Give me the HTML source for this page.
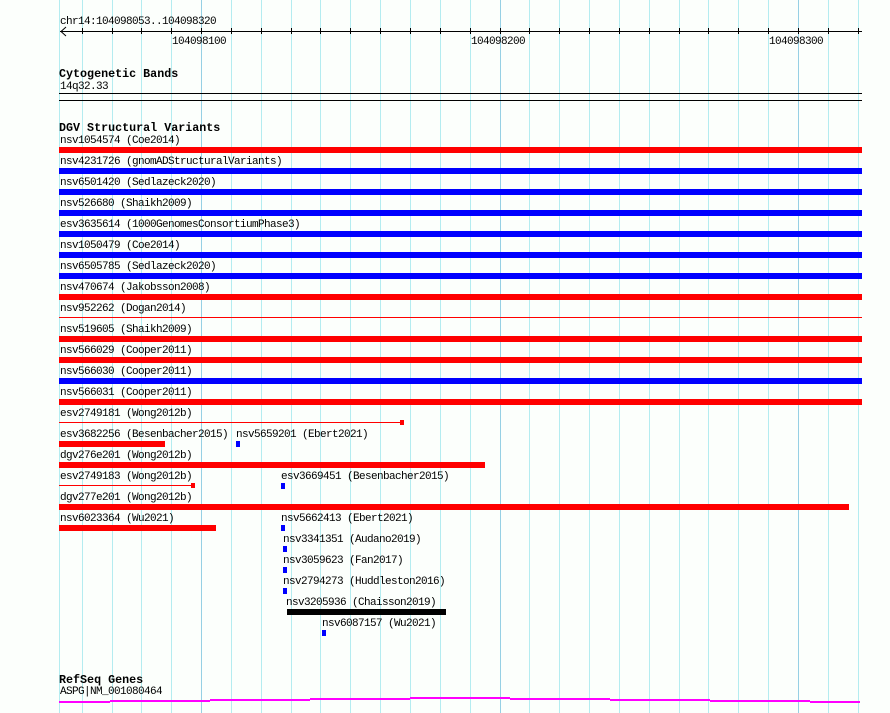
<!DOCTYPE html>
<html><head><meta charset="utf-8"><style>
body{margin:0;width:890px;height:713px;background:#fcfffc;position:relative;overflow:hidden;font-family:"Liberation Mono","DejaVu Sans Mono",monospace;}
.g{position:absolute;top:0;height:713px;width:1px;background:#b4ecf0}
.G{background:#96d0e4}
.t{position:absolute;font-size:11px;letter-spacing:-0.6px;line-height:12px;margin-top:1px;color:#000;white-space:pre}
.h{position:absolute;font-size:11.7px;line-height:13px;margin-top:1px;font-weight:bold;color:#000;white-space:pre}
.b{position:absolute;height:6px}
.r{background:#f00}.u{background:#00f}.k{background:#000}
.l{position:absolute;height:1px;background:#000}
.tk{position:absolute;top:28px;width:1px;height:6px;background:#000}
.p{position:absolute;height:2px;background:#f0f}
</style></head><body>
<div class="g" style="left:59px"></div><div class="g" style="left:82px"></div><div class="g" style="left:112px"></div><div class="g" style="left:141px"></div><div class="g" style="left:171px"></div><div class="g G" style="left:201px"></div><div class="g" style="left:231px"></div><div class="g" style="left:261px"></div><div class="g" style="left:291px"></div><div class="g" style="left:320px"></div><div class="g" style="left:350px"></div><div class="g" style="left:380px"></div><div class="g" style="left:410px"></div><div class="g" style="left:440px"></div><div class="g" style="left:470px"></div><div class="g G" style="left:500px"></div><div class="g" style="left:529px"></div><div class="g" style="left:559px"></div><div class="g" style="left:589px"></div><div class="g" style="left:619px"></div><div class="g" style="left:649px"></div><div class="g" style="left:679px"></div><div class="g" style="left:708px"></div><div class="g" style="left:738px"></div><div class="g" style="left:768px"></div><div class="g G" style="left:798px"></div><div class="g" style="left:828px"></div><div class="g" style="left:858px"></div>

<div class="t" style="left:60px;top:15px">chr14:104098053..104098320</div>
<div class="l" style="left:60px;top:31px;width:802px"></div>
<svg style="position:absolute;left:60px;top:26px" width="8" height="11"><path d="M6 1 L1 5.5 L6 10" stroke="#000" fill="none"/></svg>
<div class="tk" style="left:82px"></div><div class="tk" style="left:112px"></div><div class="tk" style="left:141px"></div><div class="tk" style="left:171px"></div><div class="tk" style="left:201px"></div><div class="tk" style="left:231px"></div><div class="tk" style="left:261px"></div><div class="tk" style="left:291px"></div><div class="tk" style="left:320px"></div><div class="tk" style="left:350px"></div><div class="tk" style="left:380px"></div><div class="tk" style="left:410px"></div><div class="tk" style="left:440px"></div><div class="tk" style="left:470px"></div><div class="tk" style="left:500px"></div><div class="tk" style="left:529px"></div><div class="tk" style="left:559px"></div><div class="tk" style="left:589px"></div><div class="tk" style="left:619px"></div><div class="tk" style="left:649px"></div><div class="tk" style="left:679px"></div><div class="tk" style="left:708px"></div><div class="tk" style="left:738px"></div><div class="tk" style="left:768px"></div><div class="tk" style="left:798px"></div><div class="tk" style="left:828px"></div><div class="tk" style="left:858px"></div>
<div class="t" style="left:172px;top:35px">104098100</div>
<div class="t" style="left:471px;top:35px">104098200</div>
<div class="t" style="left:769px;top:35px">104098300</div>

<div class="h" style="left:59px;top:67px">Cytogenetic Bands</div>
<div class="t" style="left:60px;top:80px">14q32.33</div>
<div class="l" style="left:59px;top:93px;width:803px"></div>
<div class="l" style="left:59px;top:100px;width:803px"></div>

<div class="h" style="left:59px;top:121px">DGV Structural Variants</div>
<div class="t" style="left:60px;top:134px">nsv1054574 (Coe2014)</div><div class="b r" style="left:59px;top:147px;width:803px"></div>
<div class="t" style="left:60px;top:155px">nsv4231726 (gnomADStructuralVariants)</div><div class="b u" style="left:59px;top:168px;width:803px"></div>
<div class="t" style="left:60px;top:176px">nsv6501420 (Sedlazeck2020)</div><div class="b u" style="left:59px;top:189px;width:803px"></div>
<div class="t" style="left:60px;top:197px">nsv526680 (Shaikh2009)</div><div class="b u" style="left:59px;top:210px;width:803px"></div>
<div class="t" style="left:60px;top:218px">esv3635614 (1000GenomesConsortiumPhase3)</div><div class="b u" style="left:59px;top:231px;width:803px"></div>
<div class="t" style="left:60px;top:239px">nsv1050479 (Coe2014)</div><div class="b u" style="left:59px;top:252px;width:803px"></div>
<div class="t" style="left:60px;top:260px">nsv6505785 (Sedlazeck2020)</div><div class="b u" style="left:59px;top:273px;width:803px"></div>
<div class="t" style="left:60px;top:281px">nsv470674 (Jakobsson2008)</div><div class="b r" style="left:59px;top:294px;width:803px"></div>
<div class="t" style="left:60px;top:302px">nsv952262 (Dogan2014)</div><div class="b r" style="left:59px;top:317px;width:803px;height:1px"></div>
<div class="t" style="left:60px;top:323px">nsv519605 (Shaikh2009)</div><div class="b r" style="left:59px;top:336px;width:803px"></div>
<div class="t" style="left:60px;top:344px">nsv566029 (Cooper2011)</div><div class="b r" style="left:59px;top:357px;width:803px"></div>
<div class="t" style="left:60px;top:365px">nsv566030 (Cooper2011)</div><div class="b u" style="left:59px;top:378px;width:803px"></div>
<div class="t" style="left:60px;top:386px">nsv566031 (Cooper2011)</div><div class="b r" style="left:59px;top:399px;width:803px"></div>
<div class="t" style="left:60px;top:407px">esv2749181 (Wong2012b)</div><div class="b r" style="left:59px;top:422px;width:341px;height:1px"></div><div class="b r" style="left:400px;top:420px;width:4px;height:5px"></div>
<div class="t" style="left:60px;top:428px">esv3682256 (Besenbacher2015)</div><div class="b r" style="left:59px;top:441px;width:106px"></div>
<div class="t" style="left:236px;top:428px">nsv5659201 (Ebert2021)</div><div class="b u" style="left:236px;top:441px;width:4px"></div>
<div class="t" style="left:60px;top:449px">dgv276e201 (Wong2012b)</div><div class="b r" style="left:59px;top:462px;width:426px"></div>
<div class="t" style="left:60px;top:470px">esv2749183 (Wong2012b)</div><div class="b r" style="left:59px;top:485px;width:132px;height:1px"></div><div class="b r" style="left:191px;top:483px;width:4px;height:5px"></div>
<div class="t" style="left:281px;top:470px">esv3669451 (Besenbacher2015)</div><div class="b u" style="left:281px;top:483px;width:4px"></div>
<div class="t" style="left:60px;top:491px">dgv277e201 (Wong2012b)</div><div class="b r" style="left:59px;top:504px;width:790px"></div>
<div class="t" style="left:60px;top:512px">nsv6023364 (Wu2021)</div><div class="b r" style="left:59px;top:525px;width:157px"></div>
<div class="t" style="left:281px;top:512px">nsv5662413 (Ebert2021)</div><div class="b u" style="left:281px;top:525px;width:4px"></div>
<div class="t" style="left:283px;top:533px">nsv3341351 (Audano2019)</div><div class="b u" style="left:283px;top:546px;width:4px"></div>
<div class="t" style="left:283px;top:554px">nsv3059623 (Fan2017)</div><div class="b u" style="left:283px;top:567px;width:4px"></div>
<div class="t" style="left:283px;top:575px">nsv2794273 (Huddleston2016)</div><div class="b u" style="left:283px;top:588px;width:4px"></div>
<div class="t" style="left:286px;top:596px">nsv3205936 (Chaisson2019)</div><div class="b k" style="left:287px;top:609px;width:159px"></div>
<div class="t" style="left:322px;top:617px">nsv6087157 (Wu2021)</div><div class="b u" style="left:322px;top:630px;width:4px"></div>

<div class="h" style="left:59px;top:673px">RefSeq Genes</div>
<div class="t" style="left:60px;top:685px">ASPG|NM_001080464</div>
<div class="p" style="left:59px;top:701px;width:51px"></div>
<div class="p" style="left:110px;top:700px;width:100px"></div>
<div class="p" style="left:210px;top:699px;width:100px"></div>
<div class="p" style="left:310px;top:698px;width:100px"></div>
<div class="p" style="left:410px;top:697px;width:100px"></div>
<div class="p" style="left:510px;top:698px;width:100px"></div>
<div class="p" style="left:610px;top:699px;width:100px"></div>
<div class="p" style="left:710px;top:700px;width:100px"></div>
<div class="p" style="left:810px;top:701px;width:50px"></div>
</body></html>
